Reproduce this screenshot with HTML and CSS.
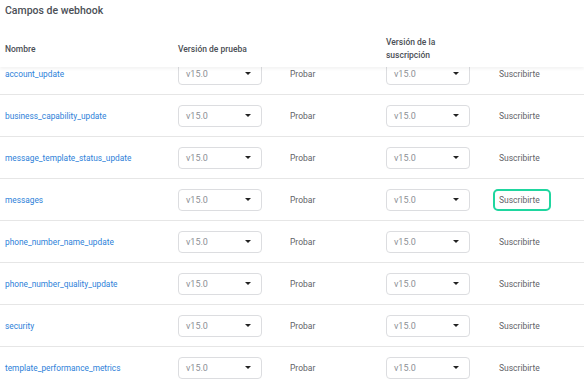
FILE: index.html
```html
<!DOCTYPE html>
<html lang="es">
<head>
    <meta charset="UTF-8">
    <title>Campos de webhook</title>
    <link rel="stylesheet" href="styles.css">
</head>
<body>
<div class="panel">
    <h2 class="panel-title">Campos de webhook</h2>

    <div class="fields-head">
        <div>Nombre</div>
        <div class="wide">Versión de prueba</div>
        <div></div>
        <div class="wrap">Versión de la suscripción</div>
        <div></div>
    </div>

    <div class="fields-body">
        <div class="field-row">
            <a href="#" class="field-name">account_update</a>
            <div class="version-select"><span>v15.0</span><i class="caret"></i></div>
            <button class="text-btn test">Probar</button>
            <div class="version-select"><span>v15.0</span><i class="caret"></i></div>
            <button class="text-btn sub">Suscribirte</button>
        </div>
        <div class="field-row">
            <a href="#" class="field-name">business_capability_update</a>
            <div class="version-select"><span>v15.0</span><i class="caret"></i></div>
            <button class="text-btn test">Probar</button>
            <div class="version-select"><span>v15.0</span><i class="caret"></i></div>
            <button class="text-btn sub">Suscribirte</button>
        </div>
        <div class="field-row">
            <a href="#" class="field-name">message_template_status_update</a>
            <div class="version-select"><span>v15.0</span><i class="caret"></i></div>
            <button class="text-btn test">Probar</button>
            <div class="version-select"><span>v15.0</span><i class="caret"></i></div>
            <button class="text-btn sub">Suscribirte</button>
        </div>
        <div class="field-row">
            <a href="#" class="field-name">messages</a>
            <div class="version-select"><span>v15.0</span><i class="caret"></i></div>
            <button class="text-btn test">Probar</button>
            <div class="version-select"><span>v15.0</span><i class="caret"></i></div>
            <button class="text-btn sub focused">Suscribirte</button>
        </div>
        <div class="field-row">
            <a href="#" class="field-name">phone_number_name_update</a>
            <div class="version-select"><span>v15.0</span><i class="caret"></i></div>
            <button class="text-btn test">Probar</button>
            <div class="version-select"><span>v15.0</span><i class="caret"></i></div>
            <button class="text-btn sub">Suscribirte</button>
        </div>
        <div class="field-row">
            <a href="#" class="field-name">phone_number_quality_update</a>
            <div class="version-select"><span>v15.0</span><i class="caret"></i></div>
            <button class="text-btn test">Probar</button>
            <div class="version-select"><span>v15.0</span><i class="caret"></i></div>
            <button class="text-btn sub">Suscribirte</button>
        </div>
        <div class="field-row">
            <a href="#" class="field-name">security</a>
            <div class="version-select"><span>v15.0</span><i class="caret"></i></div>
            <button class="text-btn test">Probar</button>
            <div class="version-select"><span>v15.0</span><i class="caret"></i></div>
            <button class="text-btn sub">Suscribirte</button>
        </div>
        <div class="field-row">
            <a href="#" class="field-name">template_performance_metrics</a>
            <div class="version-select"><span>v15.0</span><i class="caret"></i></div>
            <button class="text-btn test">Probar</button>
            <div class="version-select"><span>v15.0</span><i class="caret"></i></div>
            <button class="text-btn sub">Suscribirte</button>
        </div>
    </div>
</div>
</body>
</html>
```

FILE: styles.css
```css
/* webhook fields panel */
:root {
    --text-dark: #4b4f56;
    --text-mid: #5f6368;
    --text-light: #8d9096;
    --link-blue: #2d7fd9;
    --line: #e6e6e6;
    --focus-green: #1fd69f;
}

body {
    margin: 0;
    background: #ffffff;
    font-family: Roboto, 'Liberation Sans', Arial, sans-serif;
    color: var(--text-mid);
    overflow: hidden;
}

.panel {
    width: 584px;
}

.panel-title {
    margin: 0;
    padding: 0 5px;
    height: 31px;
    line-height: 21px;
    font-size: 10.5px;
    font-weight: 500;
    color: var(--text-dark);
}

.fields-head,
.field-row {
    display: grid;
    grid-template-columns: 173px 84px 124px 84px 1fr;
    align-items: center;
    padding-left: 5px;
}

.fields-head {
    position: relative;
    z-index: 1;
    height: 36px;
    background: #ffffff;
    box-shadow: 0 2px 3px rgba(0, 0, 0, 0.05);
    font-size: 8.5px;
    font-weight: 500;
    line-height: 13px;
    color: var(--text-dark);
}

.fields-head .wide {
    white-space: nowrap;
}

.fields-head .wrap {
    width: 70px;
}

.fields-body {
    margin-top: -14px;
}

.field-row {
    height: 41px;
    border-bottom: 1px solid var(--line);
}

.field-name {
    font-size: 8.3px;
    color: var(--link-blue);
    text-decoration: none;
}

.version-select {
    display: flex;
    align-items: center;
    justify-content: space-between;
    box-sizing: border-box;
    height: 22px;
    padding: 0 10px 0 7px;
    border: 1px solid #dcdde0;
    border-radius: 4px;
    font-size: 9px;
    color: var(--text-light);
}

.caret {
    width: 0;
    height: 0;
    border-left: 3px solid transparent;
    border-right: 3px solid transparent;
    border-top: 3px solid #222;
}

.text-btn {
    justify-self: start;
    box-sizing: border-box;
    height: 22px;
    background: none;
    border: 2px solid transparent;
    border-radius: 5px;
    font-family: inherit;
    font-size: 8.5px;
    color: var(--text-mid);
    cursor: pointer;
}

.text-btn.test {
    margin-left: 26px;
    padding: 0;
}

.text-btn.sub {
    margin-left: 23px;
    padding: 0 4px;
    width: 58px;
    text-align: left;
}

.text-btn.focused {
    border-color: var(--focus-green);
}
```
